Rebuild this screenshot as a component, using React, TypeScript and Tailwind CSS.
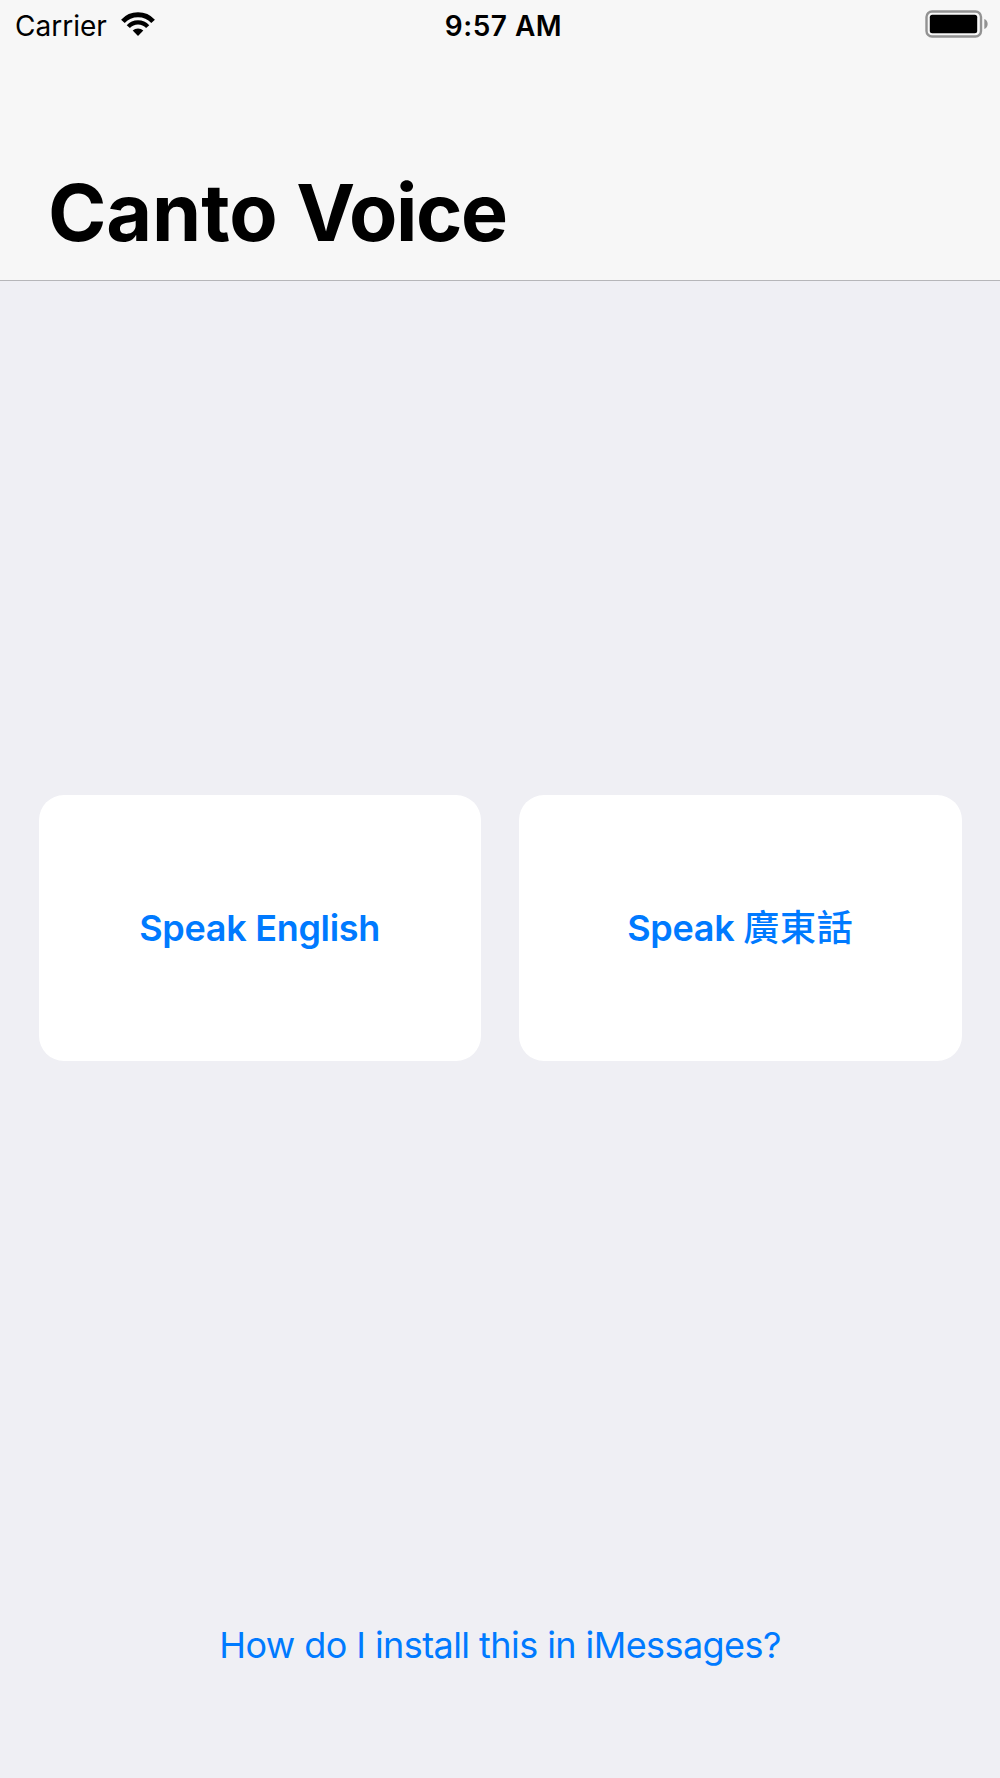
function WifiIcon() {
  return (
    <svg width="36" height="26" viewBox="0 0 36 26" fill="none" stroke="#000">
      <path d="M2.9 10.4a20.5 20.5 0 0 1 30.2 0" strokeWidth="4.9" />
      <path d="M8.3 15.6a13.2 13.2 0 0 1 19.4 0" strokeWidth="4.3" />
      <path d="M18 25l-5.3-5.4a7.5 7.5 0 0 1 10.6 0z" fill="#000" stroke="none" />
    </svg>
  );
}

function BatteryIcon() {
  return (
    <svg width="63" height="28" viewBox="0 0 63 28">
      <rect x="1.5" y="1.5" width="54.5" height="25" rx="5.5" fill="none" stroke="#929292" strokeWidth="2.4" />
      <rect x="4.8" y="4.8" width="47.4" height="18.4" rx="2.5" fill="#000" />
      <path d="M59.3 9c4.5 1.6 4.5 8.4 0 10z" fill="#929292" />
    </svg>
  );
}

function StatusBar() {
  return (
    <div className="grid h-12 grid-cols-3 items-center pl-[15px] pr-3">
      <div className="flex items-center gap-[13px]">
        <span className="pt-[3px] text-[28px] leading-8">Carrier</span>
        <WifiIcon />
      </div>
      <span className="pl-1 pt-[3px] text-center text-[28px] font-semibold leading-8 tracking-[0.5px]">9:57 AM</span>
      <div className="flex justify-end">
        <BatteryIcon />
      </div>
    </div>
  );
}

function SpeakButton({ language, cjk }: { language: string; cjk?: boolean }) {
  return (
    <button className="rounded-[25px] bg-white text-[36px] font-semibold tracking-[-0.3px] text-[#007aff]">
      Speak <span className={cjk ? "font-medium tracking-[0.8px]" : ""}>{language}</span>
    </button>
  );
}

export default function App() {
  return (
    <div className="flex h-[1778px] w-[1000px] flex-col bg-[#efeff4] font-['Inter','Noto_Sans_CJK_TC',sans-serif] text-black">
      <header className="h-[281px] border-b border-[#b6b6b9] bg-[#f7f7f7]">
        <StatusBar />
        <h1 className="mt-[116px] pl-[48px] text-[79px] font-bold leading-[96px] tracking-[-0.1px]">
          Canto <span className="tracking-[-1.4px]">Voice</span>
        </h1>
      </header>

      <main className="flex flex-1 flex-col items-center">
        <div className="mt-[514px] grid h-[265.5px] w-full grid-cols-2 gap-[38.5px] px-[38.5px]">
          <SpeakButton language="English" />
          <SpeakButton language="廣東話" cjk />
        </div>
        <a href="#install" className="mt-[560px] text-[36px] leading-[48px] tracking-[-0.57px] text-[#007aff]">
          How do I install this in iMessages?
        </a>
      </main>
    </div>
  );
}
